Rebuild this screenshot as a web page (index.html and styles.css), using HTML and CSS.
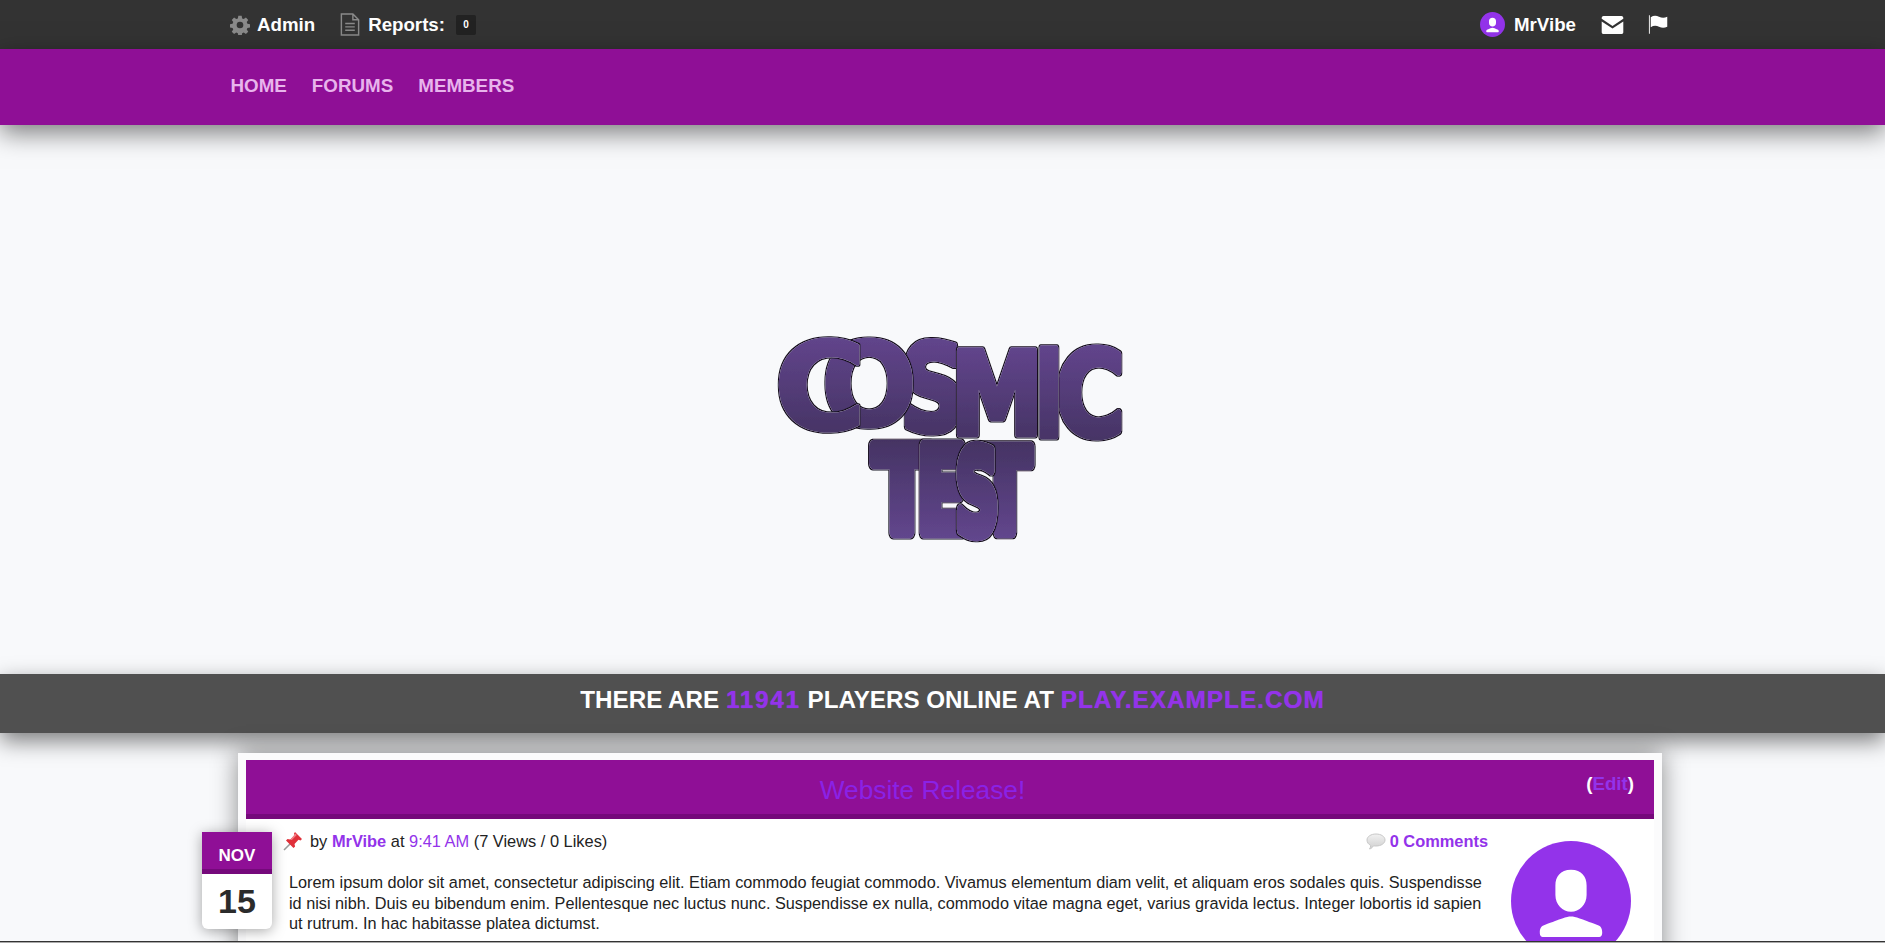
FILE: index.html
```html
<!DOCTYPE html>
<html lang="en">
<head>
    <meta charset="UTF-8">
    <meta name="viewport" content="width=device-width, initial-scale=1.0">
    <title>Cosmic Test</title>
    <link rel="stylesheet" href="styles.css">
</head>
<body>
    <div class="topbar">
        <div class="wrap topbar-in">
            <a class="top-link">
                <svg class="ico-gear" viewBox="0 0 24 24"><path fill="#8a8a8a" d="M10 1h4l.6 3.1 1.9.8 2.6-1.8 2.8 2.8-1.8 2.6.8 1.9 3.1.6v4l-3.1.6-.8 1.9 1.8 2.6-2.8 2.8-2.6-1.8-1.9.8-.6 3.1h-4l-.6-3.1-1.9-.8-2.6 1.8-2.8-2.8 1.8-2.6-.8-1.9-3.1-.6v-4l3.1-.6.8-1.9-1.8-2.6 2.8-2.8 2.6 1.8 1.9-.8zM12 8a4 4 0 1 0 0 8 4 4 0 0 0 0-8z" fill-rule="evenodd"/></svg>
                Admin
            </a>
            <a class="top-link reports">
                <svg class="ico-doc" viewBox="0 0 20 24"><path fill="none" stroke="#8a8a8a" stroke-width="1.5" d="M1 1h12l6 6v16H1zM13 1v6h6M5 11h10M5 14.500h10M5 18h10"/></svg>
                Reports:
                <span class="count">0</span>
            </a>
            <div class="top-right">
                <a class="top-link user">
                    <svg class="ico-user" viewBox="0 0 100 100"><circle cx="50" cy="50" r="50" fill="#9333ea"/><path fill="#fff" d="M50 23c-9 0-14 6-14 13v8c0 8 6 14 14 14s14-6 14-14v-8c0-7-5-13-14-13zM50 63c-5 0-10 3-22 8-3 2-3 4-3 7 0 2 1 3 3 3h44c2 0 3-1 3-3 0-3 0-5-3-7-12-5-17-8-22-8z"/></svg>
                    MrVibe
                </a>
                <svg class="ico-mail" viewBox="0 0 24 20"><path fill="#fff" d="M2 0h20c1 0 2 1 2 2v1L12 11 0 3V2C0 1 1 0 2 0zM0 6l12 8 12-8v12c0 1-1 2-2 2H2c-1 0-2-1-2-2z"/></svg>
                <svg class="ico-flag" viewBox="0 0 24 20"><path fill="#fff" d="M1 0h1v20H1zM3 2c3-2 6-2 9-.5s6 1.500 9 0v11c-3 1.500-6 1.500-9 0s-6-1.500-9 .5z"/></svg>
            </div>
        </div>
    </div>

    <div class="navbar">
        <div class="wrap nav-in">
            <a>HOME</a>
            <a>FORUMS</a>
            <a>MEMBERS</a>
        </div>
    </div>

    <div class="hero">
        <svg class="logo" viewBox="0 0 380 230" role="img" aria-label="Cosmic Test">
            <defs>
                <linearGradient id="gr1" x1="0" y1="0" x2="0" y2="1">
                    <stop offset="0" stop-color="#674894"/>
                    <stop offset="1" stop-color="#40305c"/>
                </linearGradient>
                <linearGradient id="gr2" x1="0" y1="0" x2="0" y2="1">
                    <stop offset="0" stop-color="#40305c"/>
                    <stop offset="1" stop-color="#684a96"/>
                </linearGradient>
                <filter id="outline" x="-25%" y="-25%" width="150%" height="150%">
                    <feMorphology in="SourceAlpha" operator="dilate" radius="1.200" result="fat"/>
                    <feFlood flood-color="#16111f"/>
                    <feComposite in2="fat" operator="in" result="dark"/>
                    <feMorphology in="SourceAlpha" operator="dilate" radius=".4" result="mid"/>
                    <feFlood flood-color="#b5abc6"/>
                    <feComposite in2="mid" operator="in" result="pale"/>
                    <feMerge>
                        <feMergeNode in="dark"/>
                        <feMergeNode in="pale"/>
                        <feMergeNode in="SourceGraphic"/>
                    </feMerge>
                </filter>
            </defs>
            <g fill="url(#gr1)" stroke="url(#gr1)">
                <text filter="url(#outline)" transform="translate(173 109.600) scale(.9 1.2)">S</text>
                <text filter="url(#outline)" transform="translate(237 113.600) scale(.92 1.14)">M</text>
                <text filter="url(#outline)" transform="translate(330 114.700) scale(.94 1.18)">C</text>
                <text filter="url(#outline)" transform="translate(289 116.400) scale(.76 1.2)">I</text>
                <text class="thin" filter="url(#outline)" transform="translate(109 105) scale(1.12 1.16)">O</text>
                <text class="thin" filter="url(#outline)" transform="translate(60 108.500) scale(1.24 1.22)">C</text>
            </g>
            <g class="low" fill="url(#gr2)" stroke="url(#gr2)">
                <text filter="url(#outline)" transform="translate(245 212) scale(.76 1.15)">T</text>
                <text filter="url(#outline)" transform="translate(142 212) scale(.84 1.17)">T</text>
                <text filter="url(#outline)" transform="translate(182 212) scale(.73 1.17)">E</text>
                <text filter="url(#outline)" transform="translate(217 213) scale(.6 1.15)">S</text>
            </g>
        </svg>
    </div>

    <div class="online">THERE ARE <span class="num">11941</span> PLAYERS ONLINE AT <span>PLAY.EXAMPLE.COM</span></div>

    <div class="news">
        <div class="card">
            <div class="card-head">
                <h2>Website Release!</h2>
                <span class="edit">(<a>Edit</a>)</span>
            </div>
            <div class="date">
                <div class="date-m">NOV</div>
                <div class="date-d">15</div>
            </div>
            <div class="card-body">
                <div class="post">
                    <div class="post-meta">
                        <svg class="ico-pin" viewBox="0 0 20 20"><path stroke="#9a9a9a" stroke-width="1.6" d="M1 19l7-7"/><path fill="#e0303a" d="M12 1l7 7-1.500 1.500-2-.7L11.500 13l.6 2.500L10.500 17 3 9.500l1.500-1.500 2.700.6L11.500 4.500 11 2.500z"/><path fill="#f28088" d="M12.300 2.500l1.500 1.500-5 5-1.500-.3z"/></svg>
                        <span>by <a class="b">MrVibe</a> at <a>9:41 AM</a> (7 Views / 0 Likes)</span>
                        <a class="b comments">
                            <svg class="ico-bubble" viewBox="0 0 20 17"><defs><linearGradient id="gr3" x1="0" y1="0" x2="0" y2="1"><stop offset="0" stop-color="#f1f1f1"/><stop offset="1" stop-color="#cfcfcf"/></linearGradient></defs><path fill="url(#gr3)" stroke="#c8c8c8" d="M10 1c5 0 9 2.500 9 6s-4 6-9 6c-1 0-1.500 0-2.500-.2C6.500 14.500 5 15.700 3.500 16c.8-1 1.200-2.200 1.200-3.600C2.500 11.300 1 9.500 1 7c0-3.500 4-6 9-6z"/></svg>
                            0 Comments
                        </a>
                    </div>
                    <p>Lorem ipsum dolor sit amet, consectetur adipiscing elit. Etiam commodo feugiat commodo. Vivamus elementum diam velit, et aliquam eros sodales quis. Suspendisse id nisi nibh. Duis eu bibendum enim. Pellentesque nec luctus nunc. Suspendisse ex nulla, commodo vitae magna eget, varius gravida lectus. Integer lobortis id sapien ut rutrum. In hac habitasse platea dictumst.</p>
                </div>
                <svg class="avatar" viewBox="0 0 100 100"><circle cx="50" cy="50" r="50" fill="#9333ea"/><path fill="#fff" d="M50 24c-9 0-13 6-13 13v8c0 8 6 14 13 14s13-6 13-14v-8c0-7-4-13-13-13zM50 63c-4 0-8 2-22 7-3 1-4 3-4 6 0 3 1 4 3 4h46c2 0 3-1 3-4 0-3-1-5-4-6-14-5-18-7-22-7z"/></svg>
            </div>
        </div>
    </div>

    <div class="edge"></div>
</body>
</html>
```

FILE: styles.css
```css
html, body {
    height: 100%;
}

body {
    margin: 0;
    font-family: "Liberation Sans", Arial, sans-serif;
    font-size: 16.4px;
    color: #222;
    background-color: #f8f9fb;
    overflow: hidden;
}

a {
    color: #9333ea;
    text-decoration: none;
}

.wrap {
    width: 1440px;
    margin: 0 auto;
}

/* top bar */
.topbar {
    height: 49px;
    padding-left: 15px;
    background-color: #333;
}

.topbar-in {
    display: flex;
    align-items: center;
    height: 49px;
}

.top-link {
    display: flex;
    align-items: center;
    color: #fff;
    font-size: 18.700px;
    font-weight: bold;
}

.reports {
    margin-left: 25px;
}

.ico-gear {
    width: 20px;
    height: 20px;
    margin-right: 7px;
}

.ico-doc {
    width: 20px;
    height: 23px;
    margin-right: 8px;
}

.count {
    display: flex;
    align-items: center;
    justify-content: center;
    width: 20px;
    height: 20px;
    margin-left: 11px;
    background-color: #222;
    border-radius: 2px;
    font-size: 10px;
}

.top-right {
    display: flex;
    align-items: center;
    margin-left: auto;
}

.ico-user {
    width: 25px;
    height: 25px;
    margin-right: 9px;
}

.ico-mail {
    width: 23px;
    height: 18px;
    margin-left: 25px;
}

.ico-flag {
    width: 22px;
    height: 19px;
    margin-left: 24px;
}

/* nav */
.navbar {
    position: relative;
    height: 76px;
    padding-left: 16px;
    background-color: #8f0f96;
    box-shadow: 0 8px 24px rgba(0, 0, 0, 0.5);
}

.nav-in {
    display: flex;
    gap: 25px;
    padding: 26px 0 0 0;
}

.navbar a {
    color: #e8b4ec;
    font-size: 18.800px;
    font-weight: bold;
}

/* hero */
.hero {
    display: flex;
    justify-content: center;
    height: 354px;
    padding: 195px 0 0 15px;
}

.logo {
    width: 380px;
    height: 230px;
    overflow: visible;
}

.logo text {
    font-family: "DejaVu Sans", sans-serif;
    font-size: 100px;
    font-weight: bold;
    text-anchor: middle;
    stroke-width: 6px;
    stroke-linejoin: round;
}

.logo .thin {
    stroke-width: 3px;
}

.logo .low text {
    stroke-width: 11px;
}

/* online bar */
.online {
    position: relative;
    height: 59px;
    padding-left: 20px;
    background-color: #505050;
    box-shadow: 0 8px 22px rgba(0, 0, 0, 0.5);
    color: #fff;
    font-size: 24.200px;
    font-weight: bold;
    line-height: 51px;
    text-align: center;
}

.online span {
    color: #9333ea;
    letter-spacing: 1.100px;
    text-shadow: 0 0 1px #9333ea;
}

.online .num {
    letter-spacing: 1.800px;
}

/* news card */
.news {
    padding: 20px 0 0 15px;
}

.card {
    position: relative;
    width: 1408px;
    height: 300px;
    margin: 0 auto;
    padding: 7px 8px;
    background-color: #fbfbfc;
    box-shadow: 0 0 24px rgba(0, 0, 0, 0.45);
}

.card-head {
    position: relative;
    height: 54px;
    background-color: #8f0f96;
    border-bottom: 5px solid #75097b;
    line-height: 60px;
    text-align: center;
}

.card-head h2 {
    margin: 0;
    padding-right: 55px;
    color: #8a22e6;
    font-size: 26.300px;
    font-weight: normal;
}

.edit {
    position: absolute;
    top: -6px;
    right: 20px;
    color: #fff;
    font-size: 18.700px;
    font-weight: bold;
}

.date {
    position: absolute;
    top: 79px;
    left: -36px;
    width: 70px;
    border-radius: 0 0 6px 6px;
    background-color: #fff;
    box-shadow: 0 2px 14px rgba(0, 0, 0, 0.35);
}

.date-m {
    height: 37px;
    background-color: #8f0f96;
    border-bottom: 5px solid #75097b;
    color: #fff;
    font-size: 17px;
    font-weight: bold;
    line-height: 47px;
    text-align: center;
}

.date-d {
    height: 55px;
    color: #2b2b2b;
    font-size: 34px;
    font-weight: bold;
    line-height: 55px;
    text-align: center;
}

.card-body {
    display: flex;
    height: 241px;
    padding: 12px 0 0 43px;
    background-color: #fff;
}

.post {
    width: 1199px;
}

.post-meta {
    display: flex;
    align-items: center;
    height: 20px;
    margin-left: -6px;
}

.ico-pin {
    width: 20px;
    height: 20px;
    margin-right: 7px;
}

.comments {
    display: flex;
    align-items: center;
    margin-left: auto;
}

.b {
    font-weight: bold;
}

.ico-bubble {
    width: 20px;
    height: 17px;
    margin-right: 4px;
}

.post p {
    margin: 21px 0 0;
    font-size: 16.250px;
    line-height: 20.500px;
}

.avatar {
    width: 120px;
    height: 120px;
    margin: 10px 0 0 23px;
    flex-shrink: 0;
}

/* thin line at the bottom of the window */
.edge {
    position: fixed;
    left: 0;
    right: 0;
    bottom: 0;
    height: 1px;
    background-color: #aaa;
    border-top: 1px solid #333;
}
```
